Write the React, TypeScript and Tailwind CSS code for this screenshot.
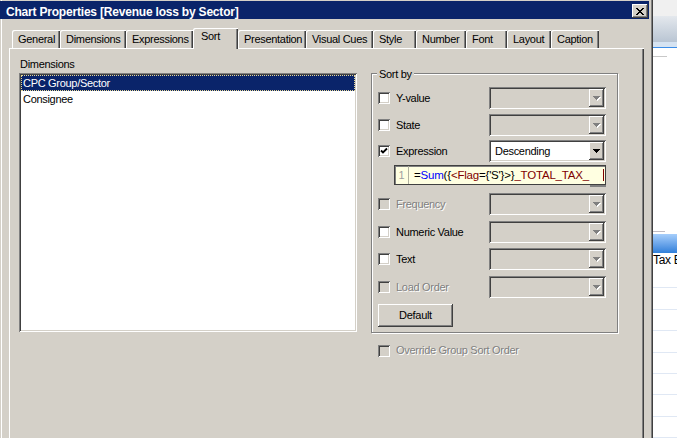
import React from 'react';

const raised =
  'shadow-[inset_-1px_-1px_0_#404040,inset_1px_1px_0_#fff,inset_-2px_-2px_0_#808080]';
const sunken =
  'shadow-[inset_1px_1px_0_#808080,inset_-1px_-1px_0_#fff,inset_2px_2px_0_#404040,inset_-2px_-2px_0_#d4d0c8]';
const disabledText = 'text-[#808080] [text-shadow:1px_1px_0_#fff]';

const tabs = [
  { label: 'General', w: 'w-[48px]' },
  { label: 'Dimensions', w: 'w-[66px]' },
  { label: 'Expressions', w: 'w-[67px]' },
  { label: 'Sort', w: 'w-[45px]', active: true },
  { label: 'Presentation', w: 'w-[68px]' },
  { label: 'Visual Cues', w: 'w-[67px]' },
  { label: 'Style', w: 'w-[43px]' },
  { label: 'Number', w: 'w-[50px]' },
  { label: 'Font', w: 'w-[41px]' },
  { label: 'Layout', w: 'w-[44px]' },
  { label: 'Caption', w: 'w-[48px]' },
];

function Arrow({ disabled }: { disabled?: boolean }) {
  return (
    <svg width="8" height="5" viewBox="0 0 8 5" shapeRendering="crispEdges">
      {disabled && <path d="M1 1h7v1H1z M2 2h5v1H2z M3 3h3v1H3z M4 4h1v1H4z" fill="#fff" />}
      <path
        d="M0 0h7v1H0z M1 1h5v1H1z M2 2h3v1H2z M3 3h1v1H3z"
        fill={disabled ? '#808080' : '#000'}
      />
    </svg>
  );
}

function Combo({ value }: { value?: string }) {
  const enabled = !!value;
  return (
    <div
      className={`flex h-[22px] w-[117px] p-[2px] ${sunken} ${enabled ? 'bg-white' : 'bg-[#d4d0c8]'}`}
    >
      <span className="flex-1 pl-[4px] leading-[18px] whitespace-nowrap">{value}</span>
      <div className={`flex w-[15px] items-center justify-center bg-[#d4d0c8] ${raised}`}>
        <Arrow disabled={!enabled} />
      </div>
    </div>
  );
}

function CheckBox({ checked, disabled }: { checked?: boolean; disabled?: boolean }) {
  return (
    <div
      className={`flex h-[12px] w-[12px] shrink-0 items-center justify-center ${sunken} ${
        disabled ? 'bg-[#d4d0c8]' : 'bg-white'
      }`}
    >
      {checked && (
        <svg width="8" height="8" viewBox="0 0 8 8">
          <polyline points="1,3.5 3,5.5 7,1.5" fill="none" stroke="#000" strokeWidth="1.8" />
        </svg>
      )}
    </div>
  );
}

function SortRow({
  label,
  value,
  checked,
  disabled,
  className,
}: {
  label: string;
  value?: string;
  checked?: boolean;
  disabled?: boolean;
  className?: string;
}) {
  return (
    <div className={`flex h-[22px] items-center ${className ?? ''}`}>
      <div className="flex w-[111px] items-center gap-[6px]">
        <CheckBox checked={checked} disabled={disabled} />
        <span className={`leading-[13px] ${disabled ? disabledText : ''}`}>{label}</span>
      </div>
      <Combo value={value} />
    </div>
  );
}

export default function App() {
  return (
    <div className="flex h-[438px] w-[677px] overflow-hidden bg-white font-['Liberation_Sans',Arial,sans-serif] text-[11px] tracking-[-0.3px] text-black">
      {/* dialog */}
      <div className="flex h-full w-[653px] shrink-0 flex-col bg-[#d4d0c8] pt-[1px] shadow-[inset_-1px_0_0_#404040,inset_-2px_0_0_#808080,inset_1px_0_0_#d4d0c8,inset_2px_0_0_#fff]">
        <div className="flex h-[18px] w-[649px] items-start bg-[#0a246a] pl-[6px]">
          <span className="pt-[4px] text-[12px] font-bold leading-[14px] tracking-[-0.2px] text-white">
            Chart Properties [Revenue loss by Sector]
          </span>
          <div className={`ml-auto mr-[1px] mt-[3px] flex h-[14px] w-[16px] items-center justify-center bg-[#d4d0c8] ${raised}`}>
            <svg width="8" height="7" viewBox="0 0 8 7" shapeRendering="crispEdges">
              <path
                d="M0 0h2v1H0z M6 0h2v1H6z M1 1h2v1H1z M5 1h2v1H5z M2 2h4v1H2z M3 3h2v1H3z M2 4h4v1H2z M1 5h2v1H1z M5 5h2v1H5z M0 6h2v1H0z M6 6h2v1H6z"
                fill="#000"
              />
            </svg>
          </div>
        </div>

        {/* tabs */}
        <div className="mt-[9px] flex h-[20px] items-end pl-[12px]">
          {tabs.map((t) =>
            t.active ? (
              <div
                key={t.label}
                className={`relative z-10 -mb-[1px] h-[21px] ${t.w} rounded-tl-[2px] bg-[#d4d0c8] pl-[8px] pt-[2px] leading-[13px] shadow-[inset_1px_1px_0_#fff,inset_-1px_0_0_#404040,inset_-2px_0_0_#808080]`}
              >
                {t.label}
              </div>
            ) : (
              <div
                key={t.label}
                className={`h-[18px] ${t.w} rounded-tl-[2px] pl-[6px] pt-[3px] leading-[13px] shadow-[inset_1px_1px_0_#fff,inset_-1px_0_0_#404040,inset_-2px_0_0_#808080]`}
              >
                {t.label}
              </div>
            ),
          )}
        </div>

        {/* panel */}
        <div className="ml-[9px] flex w-[635px] flex-1 items-start gap-[14px] pl-[10px] pt-[10px] shadow-[inset_1px_1px_0_#fff,inset_-1px_0_0_#404040,inset_-2px_0_0_#808080]">
          <div className="flex w-[338px] flex-col">
            <span className="h-[13px] pl-[1px] leading-[13px]">Dimensions</span>
            <div className={`mt-[2px] flex h-[259px] flex-col bg-white p-[2px] ${sunken}`}>
              <div className="h-[16px] bg-[#0a246a] pl-[2px] leading-[16px] text-white outline-1 -outline-offset-1 outline-dotted outline-[#e6d794]">
                CPC Group/Sector
              </div>
              <div className="h-[16px] pl-[2px] leading-[16px]">Consignee</div>
            </div>
          </div>

          <div className="mt-[15px] flex flex-col">
            <div className="relative h-[260px] w-[247px] border border-[#808080] pl-[6px] pt-[13px] shadow-[1px_1px_0_#fff,inset_1px_1px_0_#fff]">
              <span className="absolute -top-[6px] left-[5px] bg-[#d4d0c8] px-[2px] leading-[13px]">
                Sort by
              </span>
              <SortRow label="Y-value" />
              <SortRow label="State" className="mt-[5px]" />
              <SortRow label="Expression" value="Descending" checked className="mt-[4px]" />
              <div className="ml-[16px] mt-[3px] flex w-[212px] flex-col">
                <div className="flex h-[20px] items-center border border-[#404040] bg-[#ffffe1] pr-[1px] shadow-[inset_1px_1px_0_#808080]">
                  <span className="w-[13px] shrink-0 text-center leading-[13px] text-[#a0a0a0]">1</span>
                  <span className="h-full w-px shrink-0 bg-[#b0b0a0]" />
                  <span className="min-w-0 flex-1 whitespace-nowrap pl-[5px] text-[11.5px] leading-[14px] tracking-[-0.2px]">
                    =<span className="text-[#0000ff]">Sum</span>({'{'}
                    <span className="text-[#800000]">{'<Flag'}</span>
                    {"={'S'}>}"}
                    <span className="text-[#800000]">_TOTAL_TAX_</span>
                  </span>
                  <span className="h-[12px] w-px shrink-0 bg-[#800000]" />
                </div>
                <div className="h-[2px] w-[16px] self-end bg-[#808080]" />
              </div>
              <SortRow label="Frequency" disabled className="mt-[6px]" />
              <SortRow label="Numeric Value" className="mt-[6px]" />
              <SortRow label="Text" className="mt-[5px]" />
              <SortRow label="Load Order" disabled className="mt-[6px]" />
              <button
                className={`mt-[6px] flex h-[23px] w-[75px] items-center justify-center bg-[#d4d0c8] leading-[13px] ${raised}`}
              >
                Default
              </button>
            </div>
            <div className="ml-[7px] mt-[11px] flex items-center gap-[6px]">
              <CheckBox disabled />
              <span className={`leading-[13px] ${disabledText}`}>Override Group Sort Order</span>
            </div>
          </div>
        </div>
      </div>

      {/* application behind the dialog */}
      <div className="flex min-w-0 flex-1 flex-col bg-white">
        <div className="h-[17px] bg-[#f0f0f0]" />
        <div className="h-[26px] bg-gradient-to-b from-[#e4e8ed] to-[#b9c5d3]" />
        <div className="h-[5px] bg-[#d6e3f1]" />
        <div className="h-[2px] bg-[#3d8ee8]" />
        <div className="mt-[8px] h-px w-[14px] bg-[#c8c8c8]" />
        <div className="h-[179px]" />
        <div className="h-px w-[12px] bg-[#c0bcc4]" />
        <div className="h-[2px]" />
        <div className="h-[20px] bg-gradient-to-b from-[#a6cefb] to-[#2f7fd9]" />
        <div className="h-[14px] overflow-hidden whitespace-nowrap text-[12px] leading-[14px] tracking-[-0.3px]">
          Tax E
        </div>
        {[0, 1, 2, 3, 4, 5, 6, 7].map((i) => (
          <div key={i} className="h-[22px] border-b border-[#e0e8f4]" />
        ))}
      </div>
    </div>
  );
}
